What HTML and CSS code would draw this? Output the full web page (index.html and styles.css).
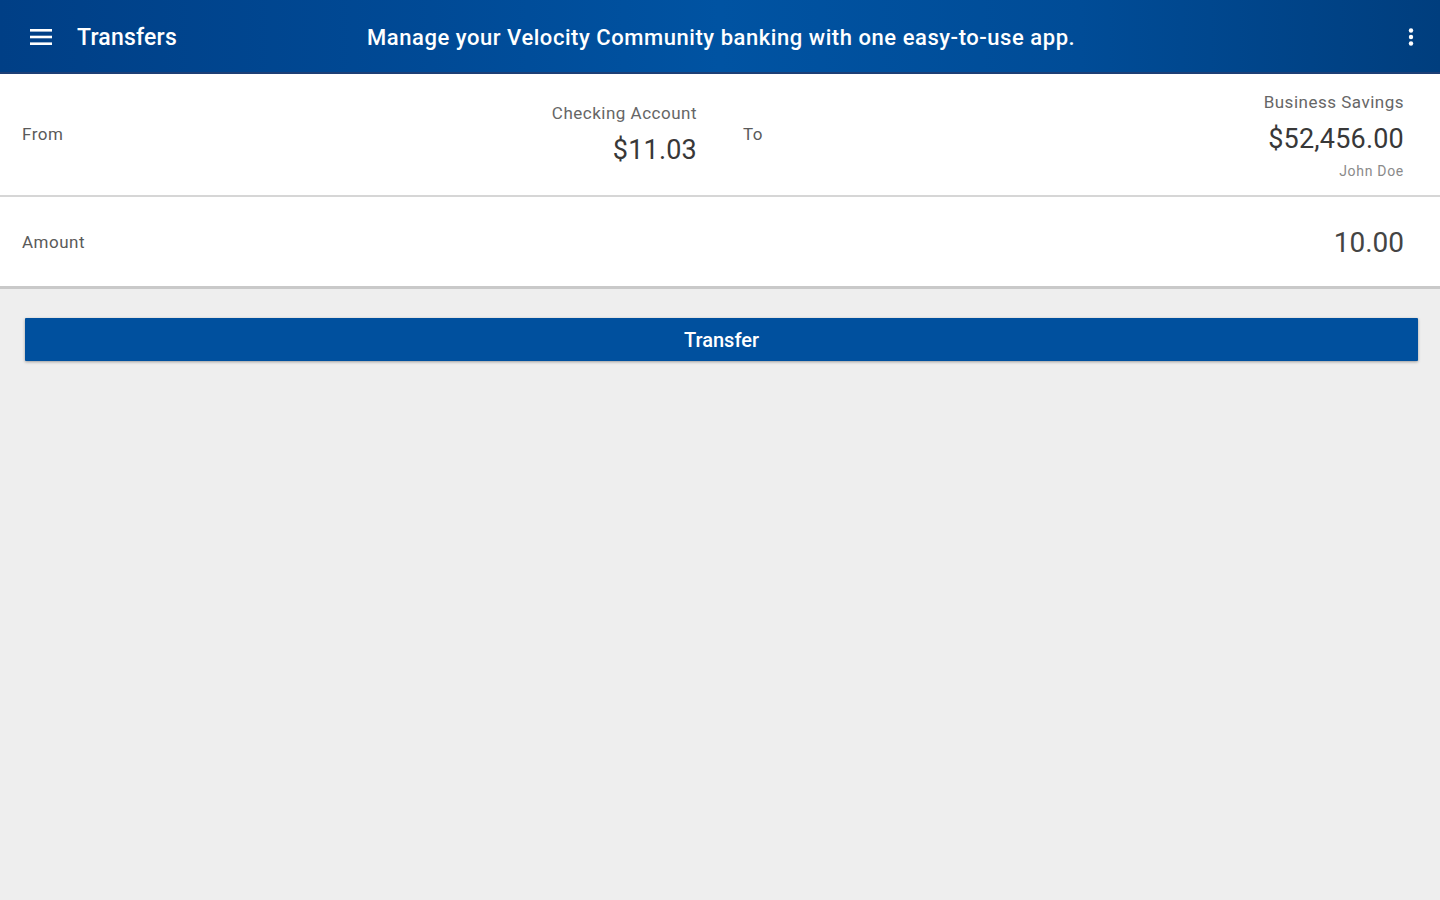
FILE: index.html
```html
<!DOCTYPE html>
<html>
<head>
<meta charset="utf-8">
<title>Transfers</title>
<link rel="stylesheet" href="styles.css">
</head>
<body>
<header class="appbar">
  <div class="appbar-left">
    <svg class="icon-menu" width="22" height="16" viewBox="0 0 22 16"><rect x="0" y="0" width="22" height="2.6" fill="#fff"/><rect x="0" y="6.7" width="22" height="2.6" fill="#fff"/><rect x="0" y="13.4" width="22" height="2.6" fill="#fff"/></svg>
    <span class="appbar-title">Transfers</span>
  </div>
  <div class="appbar-tagline">Manage your Velocity Community banking with one easy-to-use app.</div>
  <svg class="icon-more" width="6" height="18" viewBox="0 0 6 18"><circle cx="3" cy="2.5" r="2.2" fill="#fff"/><circle cx="3" cy="9" r="2.2" fill="#fff"/><circle cx="3" cy="15.5" r="2.2" fill="#fff"/></svg>
</header>

<main class="content">
  <section class="card">
    <div class="row row-accounts">
      <div class="half half-from">
        <span class="label">From</span>
        <div class="account">
          <div class="acct-name">Checking Account</div>
          <div class="acct-balance">$11.03</div>
        </div>
      </div>
      <div class="half half-to">
        <span class="label">To</span>
        <div class="account">
          <div class="acct-name">Business Savings</div>
          <div class="acct-balance">$52,456.00</div>
          <div class="acct-owner">John Doe</div>
        </div>
      </div>
    </div>
    <div class="row row-amount">
      <span class="label">Amount</span>
      <span class="amount">10.00</span>
    </div>
  </section>

  <div class="actions">
    <button class="btn-transfer">Transfer</button>
  </div>
</main>
</body>
</html>
```

FILE: styles.css
```css
* { box-sizing: border-box; }
html, body { margin: 0; padding: 0; }
body {
  width: 1440px;
  height: 900px;
  background: #eeeeee;
  font-family: Roboto, "Noto Sans", Arial, sans-serif;
  overflow: hidden;
}

.appbar {
  height: 74px;
  display: flex;
  align-items: center;
  padding: 0 26px 0 30px;
  background: linear-gradient(90deg, #003f86 0%, #004a96 30%, #0053a2 50%, #004c97 75%, #003e7e 100%);
  border-bottom: 2px solid #1d3f76;
  box-shadow: 0 1px 2px rgba(0,0,0,0.25);
  color: #fff;
}
.appbar-left {
  display: flex;
  align-items: center;
  width: 337px;
  flex-shrink: 0;
}
.icon-menu { display: block; margin-top: 2px; }
.appbar-title {
  margin-left: 25px;
  font-size: 23px;
  font-weight: 500;
  letter-spacing: 0.2px;
  margin-top: 3px;
}
.appbar-tagline {
  flex: 1;
  font-size: 22px;
  font-weight: 500;
  letter-spacing: 0.55px;
  margin-top: 3px;
}
.icon-more { display: block; margin-top: 1px; }

.card {
  background: #fff;
}
.row {
  display: flex;
  align-items: center;
  background: #fff;
}
.row-accounts {
  height: 123px;
  border-bottom: 2px solid #d6d6d6;
}
.half {
  flex: 0 0 50%;
  display: flex;
  align-items: center;
  justify-content: space-between;
  height: 100%;
}
.half-from { padding: 0 23px 0 22px; }
.half-to { padding: 0 36px 0 23px; }
.label {
  font-size: 17px;
  letter-spacing: 0.5px;
  color: #5a5a5a;
}
.half-from .label, .half-to .label { margin-top: -2px; }
.account {
  text-align: right;
}
.acct-name {
  font-size: 17px;
  letter-spacing: 0.5px;
  color: #666;
  line-height: 22px;
}
.acct-balance {
  font-size: 27px;
  font-weight: 400;
  letter-spacing: 0.2px;
  color: #383838;
  line-height: 34px;
  margin-top: 9px;
}
.half-from .account { margin-top: 0; }
.half-to .account { margin-top: 2px; }
.acct-owner {
  font-size: 14px;
  letter-spacing: 0.7px;
  color: #8a8a8a;
  line-height: 18px;
  margin-top: 6px;
}

.row-amount {
  height: 92px;
  justify-content: space-between;
  padding: 0 36px 0 22px;
  border-bottom: 3px solid #c9c9c9;
}
.amount {
  font-size: 28px;
  color: #444;
  margin-top: 2px;
}

.actions {
  padding: 29px 22px 0 25px;
}
.btn-transfer {
  display: block;
  width: 100%;
  height: 43px;
  border: none;
  border-radius: 1px;
  background: #00509e;
  color: #fff;
  font-family: Roboto, "Noto Sans", Arial, sans-serif;
  font-size: 20px;
  font-weight: 500;
  box-shadow: 0 1px 3px rgba(0,0,0,0.35);
  cursor: pointer;
}
```
